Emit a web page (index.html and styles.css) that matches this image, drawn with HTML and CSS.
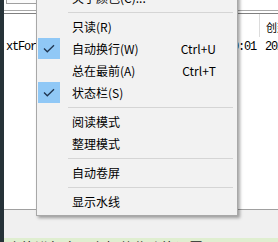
FILE: index.html
```html
<!DOCTYPE html>
<html lang="zh-CN">
<head>
<meta charset="utf-8">
<title>菜单</title>
<link rel="stylesheet" href="styles.css">
</head>
<body>
<div class="desk">
  <div class="edge"></div>
  <div class="win">
    <div class="content">
      <div class="toolbar"><div class="search"></div></div>
      <div class="rule"></div>
      <div class="head">
        <div class="hcell c1"></div>
        <div class="hcell c2"></div>
        <div class="hcell c3">创建时间</div>
      </div>
      <div class="row">
        <div class="cell c1">xtFormat</div>
        <div class="cell c2">00:01</div>
        <div class="cell c3">2024-05-16</div>
      </div>
    </div>
    <div class="status"></div>
    <div class="notice">止能进行自从上相若此功能设置</div>
  </div>
</div>

<div class="menu">
  <div class="item"><span class="chk"></span><span class="label">关于颜色(C)...</span></div>
  <div class="sep"></div>
  <div class="item"><span class="chk"></span><span class="label">只读(R)</span></div>
  <div class="item"><span class="chk on"><svg width="12" height="9" viewBox="0 0 12 9"><polyline points="1,4.5 4.3,7.8 11,1.2" fill="none" stroke="#1f3550" stroke-width="1.3"/></svg></span><span class="label">自动换行(W)</span><span class="key">Ctrl+U</span></div>
  <div class="item"><span class="chk"></span><span class="label">总在最前(A)</span><span class="key">Ctrl+T</span></div>
  <div class="item"><span class="chk on"><svg width="12" height="9" viewBox="0 0 12 9"><polyline points="1,4.5 4.3,7.8 11,1.2" fill="none" stroke="#1f3550" stroke-width="1.3"/></svg></span><span class="label">状态栏(S)</span></div>
  <div class="sep"></div>
  <div class="item"><span class="chk"></span><span class="label">阅读模式</span></div>
  <div class="item"><span class="chk"></span><span class="label">整理模式</span></div>
  <div class="sep"></div>
  <div class="item"><span class="chk"></span><span class="label">自动卷屏</span></div>
  <div class="sep"></div>
  <div class="item"><span class="chk"></span><span class="label">显示水线</span></div>
</div>
</body>
</html>
```

FILE: styles.css
```css
* { box-sizing: border-box; }
html, body {
  margin: 0;
  padding: 0;
  width: 278px;
  height: 242px;
  overflow: hidden;
  background: #ffffff;
}
body {
  position: relative;
  font-family: "Noto Sans CJK SC", "Noto Sans", sans-serif;
}
.desk {
  display: flex;
  width: 278px;
  height: 242px;
}
.edge {
  width: 4px;
  flex: none;
  background: #263238;
}
.win {
  flex: 1;
  display: flex;
  flex-direction: column;
  overflow: hidden;
}
.content {
  height: 210px;
  flex: none;
  background: #ffffff;
  border-bottom: 1px solid #a0a0a0;
}
.toolbar {
  height: 10px;
  overflow: hidden;
  padding-left: 2px;
}
.search {
  width: 120px;
  height: 20px;
  margin-top: -16px;
  border: 1px solid #a0a0a0;
  background: #fbfbfb;
}
.rule {
  height: 4px;
  border-top: 1px solid #a8a8a8;
  border-bottom: 1px solid #808080;
}
.head, .row {
  display: flex;
  white-space: nowrap;
}
.head { height: 23px; }
.row {
  height: 21px;
  font-family: "Liberation Mono", monospace;
  font-size: 12px;
  letter-spacing: -1.2px;
  line-height: 21px;
  color: #000;
}
.c1 { width: 58px; flex: none; padding-left: 2px; overflow: hidden; }
.c2 { width: 197px; flex: none; text-align: right; padding-right: 3px; overflow: hidden; }
.c3 { flex: 1; overflow: hidden; padding-left: 6px; }
.hcell.c3 {
  border-left: 1px solid #dcdcdc;
  font-size: 11px;
  line-height: 23px;
  padding-left: 6px;
  padding-top: 2px;
  color: #000;
}
.status {
  height: 28px;
  flex: none;
  background: #f0f0f0;
}
.notice {
  flex: 1;
  background: #dfeed0;
  font-size: 14px;
  line-height: 16px;
  padding: 1px 0 0 3px;
  color: #222;
  white-space: nowrap;
  overflow: hidden;
}

/* context menu overlay */
.menu {
  position: absolute;
  left: 36px;
  top: -16px;
  width: 202px;
  padding: 2px 0;
  background: #f2f2f2;
  border: 1px solid #a8a8a8;
  box-shadow: 2px 2px 3px rgba(0, 0, 0, 0.35);
  font-size: 12px;
  color: #000;
}
.item {
  display: flex;
  align-items: center;
  height: 22px;
  padding-right: 21px;
  white-space: nowrap;
}
.chk {
  width: 22px;
  height: 21px;
  margin-left: 1px;
  margin-right: 12px;
  align-self: flex-start;
  display: flex;
  align-items: center;
  justify-content: center;
  flex: none;
}
.chk.on { background: #90c8f6; }
.label { flex: 1; line-height: 22px; }
.key { line-height: 22px; }
.sep {
  height: 7px;
  padding-top: 3px;
  margin: 0 4px 0 31px;
}
.sep::before {
  content: "";
  display: block;
  height: 1px;
  background: #d5d5d5;
}
```
